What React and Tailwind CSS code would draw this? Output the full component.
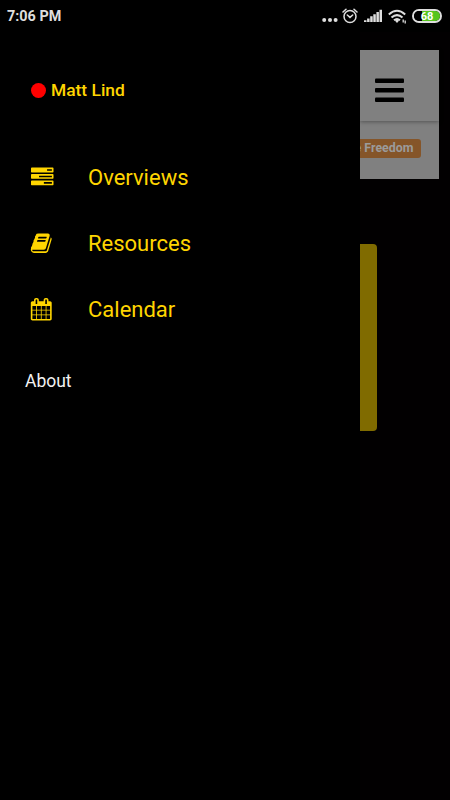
const menu = [
  {
    label: 'Overviews',
    iconClass: 'ml-[31px]',
    path: 'M1024 1408h640v-128h-640v128zm-384-512h1024v-128h-1024v128zm640-512h384v-128h-384v128zm512 832v256q0 26-19 45t-45 19h-1664q-26 0-45-19t-19-45v-256q0-26 19-45t45-19h1664q26 0 45 19t19 45zm0-512v256q0 26-19 45t-45 19h-1664q-26 0-45-19t-19-45v-256q0-26 19-45t45-19h1664q26 0 45 19t19 45zm0-512v256q0 26-19 45t-45 19h-1664q-26 0-45-19t-19-45v-256q0-26 19-45t45-19h1664q26 0 45 19t19 45z',
  },
  {
    label: 'Resources',
    iconClass: 'ml-[30.3px]',
    path: 'M1703 478q40 57 18 129l-275 906q-19 64-76.5 107.5t-122.5 43.5h-923q-77 0-148.5-53.5t-99.5-131.5q-24-67-2-127 0-4 3-27t4-37q1-8-3-21.5t-3-19.5q2-11 8-21t16.5-23.5 16.5-23.5q23-38 45-91.5t30-91.5q3-10 .5-30t-.5-28q3-11 17-28t17-23q21-36 42-92t25-90q1-9-2.5-32t.5-28q4-13 22-30.5t22-22.5q19-26 42.5-84.5t27.5-96.5q1-8-3-25.5t-2-26.5q2-8 9-18t18-23 17-21q8-12 16.5-30.5t15-35 16-36 19.5-32 26.5-23.5 36-11.5 47.5 5.5l-1 3q38-9 51-9h761q74 0 114 56t18 130l-274 906q-36 119-71.5 153.5t-128.5 34.5h-869q-27 0-38 15-11 16-1 43 24 70 144 70h923q29 0 56-15.5t35-41.5l300-987q7-22 5-57 38 15 59 43zm-1064 2q-4 13 2 22.5t20 9.5h608q13 0 25.5-9.5t16.5-22.5l21-64q4-13-2-22.5t-20-9.5h-608q-13 0-25.5 9.5t-16.5 22.5zm-83 256q-4 13 2 22.5t20 9.5h608q13 0 25.5-9.5t16.5-22.5l21-64q4-13-2-22.5t-20-9.5h-608q-13 0-25.5 9.5t-16.5 22.5z',
  },
  {
    label: 'Calendar',
    iconClass: 'ml-[30.3px]',
    path: 'M192 1664h288v-288h-288v288zm352 0h320v-288h-320v288zm-352-352h288v-320h-288v320zm352 0h320v-320h-320v320zm-352-384h288v-288h-288v288zm736 736h320v-288h-320v288zm-384-736h320v-288h-320v288zm768 736h288v-288h-288v288zm-384-352h320v-320h-320v320zm-352-864v-288q0-13-9.5-22.5t-22.5-9.5h-64q-13 0-22.5 9.5t-9.5 22.5v288q0 13 9.5 22.5t22.5 9.5h64q13 0 22.5-9.5t9.5-22.5zm736 864h288v-320h-288v320zm-384-384h320v-288h-320v288zm384 0h288v-288h-288v288zm32-480v-288q0-13-9.5-22.5t-22.5-9.5h-64q-13 0-22.5 9.5t-9.5 22.5v288q0 13 9.5 22.5t22.5 9.5h64q13 0 22.5-9.5t9.5-22.5zm384-64v1280q0 52-38 90t-90 38h-1408q-52 0-90-38t-38-90v-1280q0-52 38-90t90-38h128v-96q0-66 47-113t113-47h64q66 0 113 47t47 113v96h384v-96q0-66 47-113t113-47h64q66 0 113 47t47 113v96h128q52 0 90 38t38 90z',
  },
];

function StatusBar() {
  return (
    <header className="flex h-8 shrink-0 items-center justify-between pl-[7px] pr-[8px] text-[#dedede]">
      <span className="pt-[2px] text-[14.4px] font-bold leading-8">7:06 PM</span>
      <div className="flex items-center">
        <svg className="mr-[4px] mt-[8px] h-[4px] w-[16px]" viewBox="0 0 16 4" fill="currentColor">
          <circle cx="2.2" cy="2" r="2" />
          <circle cx="8" cy="2" r="2" />
          <circle cx="13.6" cy="2" r="2" />
        </svg>
        {/* Alarm */}
        <svg className="mr-[6px] h-[16px] w-[16px]" viewBox="0 0 16 16" fill="none" stroke="currentColor" strokeWidth="1.5">
          <circle cx="8" cy="8.5" r="6" />
          <path d="M1 4 4 1.2M12 1.2 15 4M5.3 7 8 9.4 10.7 7" strokeLinecap="round" />
        </svg>
        {/* Signal */}
        <svg className="mr-[6px] h-[14px] w-[18px]" viewBox="0 0 18 14" fill="currentColor">
          <path d="M0 11.2h2.5V13H0zM3.1 9.5h2.5V13H3.1zM6.2 7.3h2.5V13H6.2zM9.3 5.2h2.5V13H9.3zM12.4 3h2.5v10h-2.5zM15.5.8H18V13h-2.5z" />
        </svg>
        {/* Wifi */}
        <svg className="mr-[5px] h-[15px] w-[19px]" viewBox="0 0 19 15" fill="none" stroke="currentColor" strokeWidth="2">
          <path d="M.8 5.5Q9 -1.9 17.2 5.5M3.5 8.6Q9 3.6 14.5 8.6M6 11.3Q9 8.6 12 11.3" />
          <path d="M6.8 11.5 9 10.7l2.2.8L9 14z" fill="currentColor" stroke="none" />
          <path d="M15.2 10.6v3M17.2 11.4v3" strokeWidth="1.3" />
        </svg>
        <div className="flex h-[14px] w-[30px] rounded-full border-2 border-[#dedede]">
          <div className="flex h-full w-full items-center justify-center rounded-full bg-[linear-gradient(90deg,#000_30%,#56c51d_30%)] text-[11px] font-bold leading-none text-white">
            68
          </div>
        </div>
      </div>
    </header>
  );
}

function Drawer() {
  return (
    <aside className="z-10 w-[360px] shrink-0 bg-black text-[#ffd500]">
      <div className="mt-[46px] flex h-6 items-center pl-[31px] text-[17.4px] font-medium">
        <span className="mr-[5px] h-[15px] w-[15px] rounded-full bg-[#ff0000]" />
        <span className="pt-px">Matt Lind</span>
      </div>
      <nav className="mt-[42px]">
        {menu.map((item) => (
          <a key={item.label} className="flex h-[66.3px] items-center">
            <span className="w-[88px]">
              <svg className={`h-[22.5px] w-[22.5px] ${item.iconClass}`} viewBox="0 0 1792 1792" fill="currentColor">
                <path d={item.path} />
              </svg>
            </span>
            <span className="text-[22px]">{item.label}</span>
          </a>
        ))}
      </nav>
      <a className="mt-[26px] block pl-[25px] text-[17.5px] leading-6 text-[#f2f2f2]">About</a>
    </aside>
  );
}

// The part of the page that stays visible beside the open drawer
function DimmedPage() {
  return (
    <main className="min-w-0 flex-1 bg-[#020001]">
      <div className="mt-[18px] h-[129px] w-[79px] bg-[#808080]">
        <div className="h-[71px] pl-[14.5px] pt-[28px] shadow-[0_1px_4px_rgba(0,0,0,0.35)]">
          <svg className="h-[25px] w-[29px]" viewBox="0 0 29 25">
            <rect y="0.5" width="29" height="4.5" rx="1" />
            <rect y="10" width="29" height="4.5" rx="1" />
            <rect y="19.5" width="29" height="4.5" rx="1" />
          </svg>
        </div>
        <div className="mt-[18px] flex h-[19px] w-[61px] justify-end rounded-r-[3px] bg-[#855529] pr-[7.5px] text-[12.4px] font-bold leading-[17px] text-[#9b9b9b]">
          <span className="whitespace-nowrap">e Freedom</span>
        </div>
      </div>
      <div className="mt-[65px] h-[187px] w-[17px] rounded-r-[4px] bg-[#806b00]" />
    </main>
  );
}

export default function App() {
  return (
    <div className="flex h-[800px] w-[450px] flex-col overflow-hidden bg-black font-[Roboto,sans-serif]">
      <StatusBar />
      <div className="flex flex-1">
        <Drawer />
        <DimmedPage />
      </div>
    </div>
  );
}
